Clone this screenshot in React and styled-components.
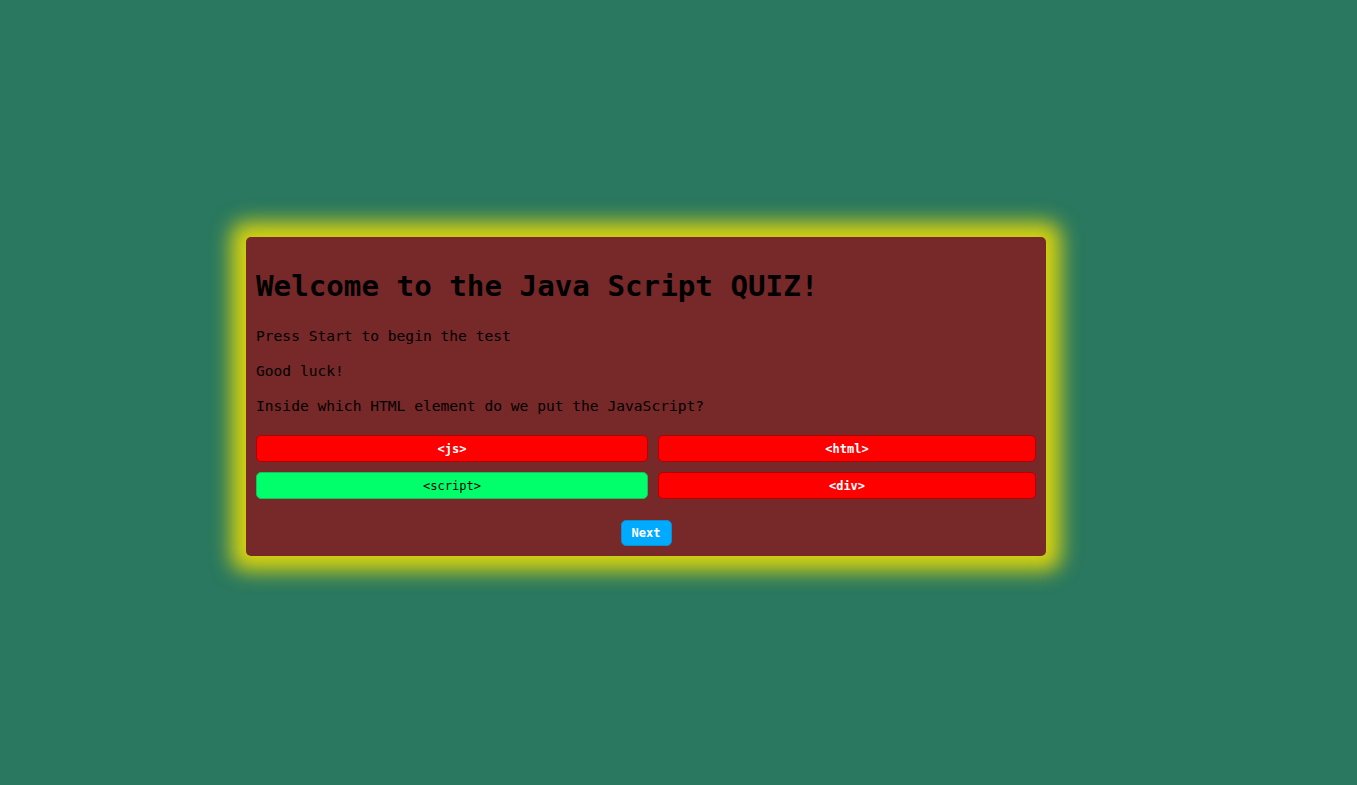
import React, { useState } from "react";
import styled, { createGlobalStyle } from "styled-components";

const GlobalStyle = createGlobalStyle`
  html, body {
    margin: 0;
    padding: 0;
    background: #29785f;
  }
  body {
    font-family: "DejaVu Sans Mono", "Liberation Mono", monospace;
  }
`;

const answers = [
  { text: "<js>", correct: false },
  { text: "<html>", correct: false },
  { text: "<script>", correct: true },
  { text: "<div>", correct: false },
];

const App = () => {
  const [picked] = useState(true);

  return (
    <>
      <GlobalStyle />
      <Page>
        <Card>
          <Title>Welcome to the Java Script QUIZ!</Title>
          <Text>Press Start to begin the test</Text>
          <Text>Good luck!</Text>
          <Text>Inside which HTML element do we put the JavaScript?</Text>
          <Answers>
            {answers.map((a) => (
              <Answer key={a.text} $correct={picked && a.correct}>
                {a.text}
              </Answer>
            ))}
          </Answers>
          <Controls>
            <NextButton>Next</NextButton>
          </Controls>
        </Card>
      </Page>
    </>
  );
};

const Page = styled.main`
  min-height: 100vh;
  box-sizing: border-box;
  padding: 237px 0 0 246px;
`;

const Card = styled.section`
  width: 800px;
  box-sizing: border-box;
  padding: 10px;
  background: #772828;
  border-radius: 5px;
  box-shadow: 0 0 20px 15px #d6d210;
  color: #000;
`;

const Title = styled.h1`
  font-size: 29.2px;
  font-weight: bold;
  margin: 21px 0;
  line-height: 37px;
`;

const Text = styled.p`
  font-size: 14.6px;
  line-height: 19px;
  margin: 16px 0;
`;

const Answers = styled.div`
  display: grid;
  grid-template-columns: 392px 1fr;
  gap: 10px;
  margin-top: 20px;
`;

const Answer = styled.button`
  height: 27px;
  box-sizing: border-box;
  border: 1px solid ${(p) => (p.$correct ? "#11c55a" : "#b50000")};
  border-radius: 5px;
  background: ${(p) => (p.$correct ? "#00ff6a" : "#ff0000")};
  color: ${(p) => (p.$correct ? "#000" : "#fff")};
  font-family: "DejaVu Sans Mono", "Liberation Mono", monospace;
  font-size: 12px;
  font-weight: ${(p) => (p.$correct ? "normal" : "bold")};
  padding: 0;
  cursor: pointer;
`;

const Controls = styled.div`
  display: flex;
  justify-content: center;
  margin-top: 21px;
`;

const NextButton = styled.button`
  width: 51px;
  height: 26px;
  border: 1px solid #0a8fd0;
  border-radius: 5px;
  background: #00aaff;
  color: #fff;
  font-family: "DejaVu Sans Mono", "Liberation Mono", monospace;
  font-size: 12px;
  font-weight: bold;
  padding: 0;
  cursor: pointer;
`;

export default App;
